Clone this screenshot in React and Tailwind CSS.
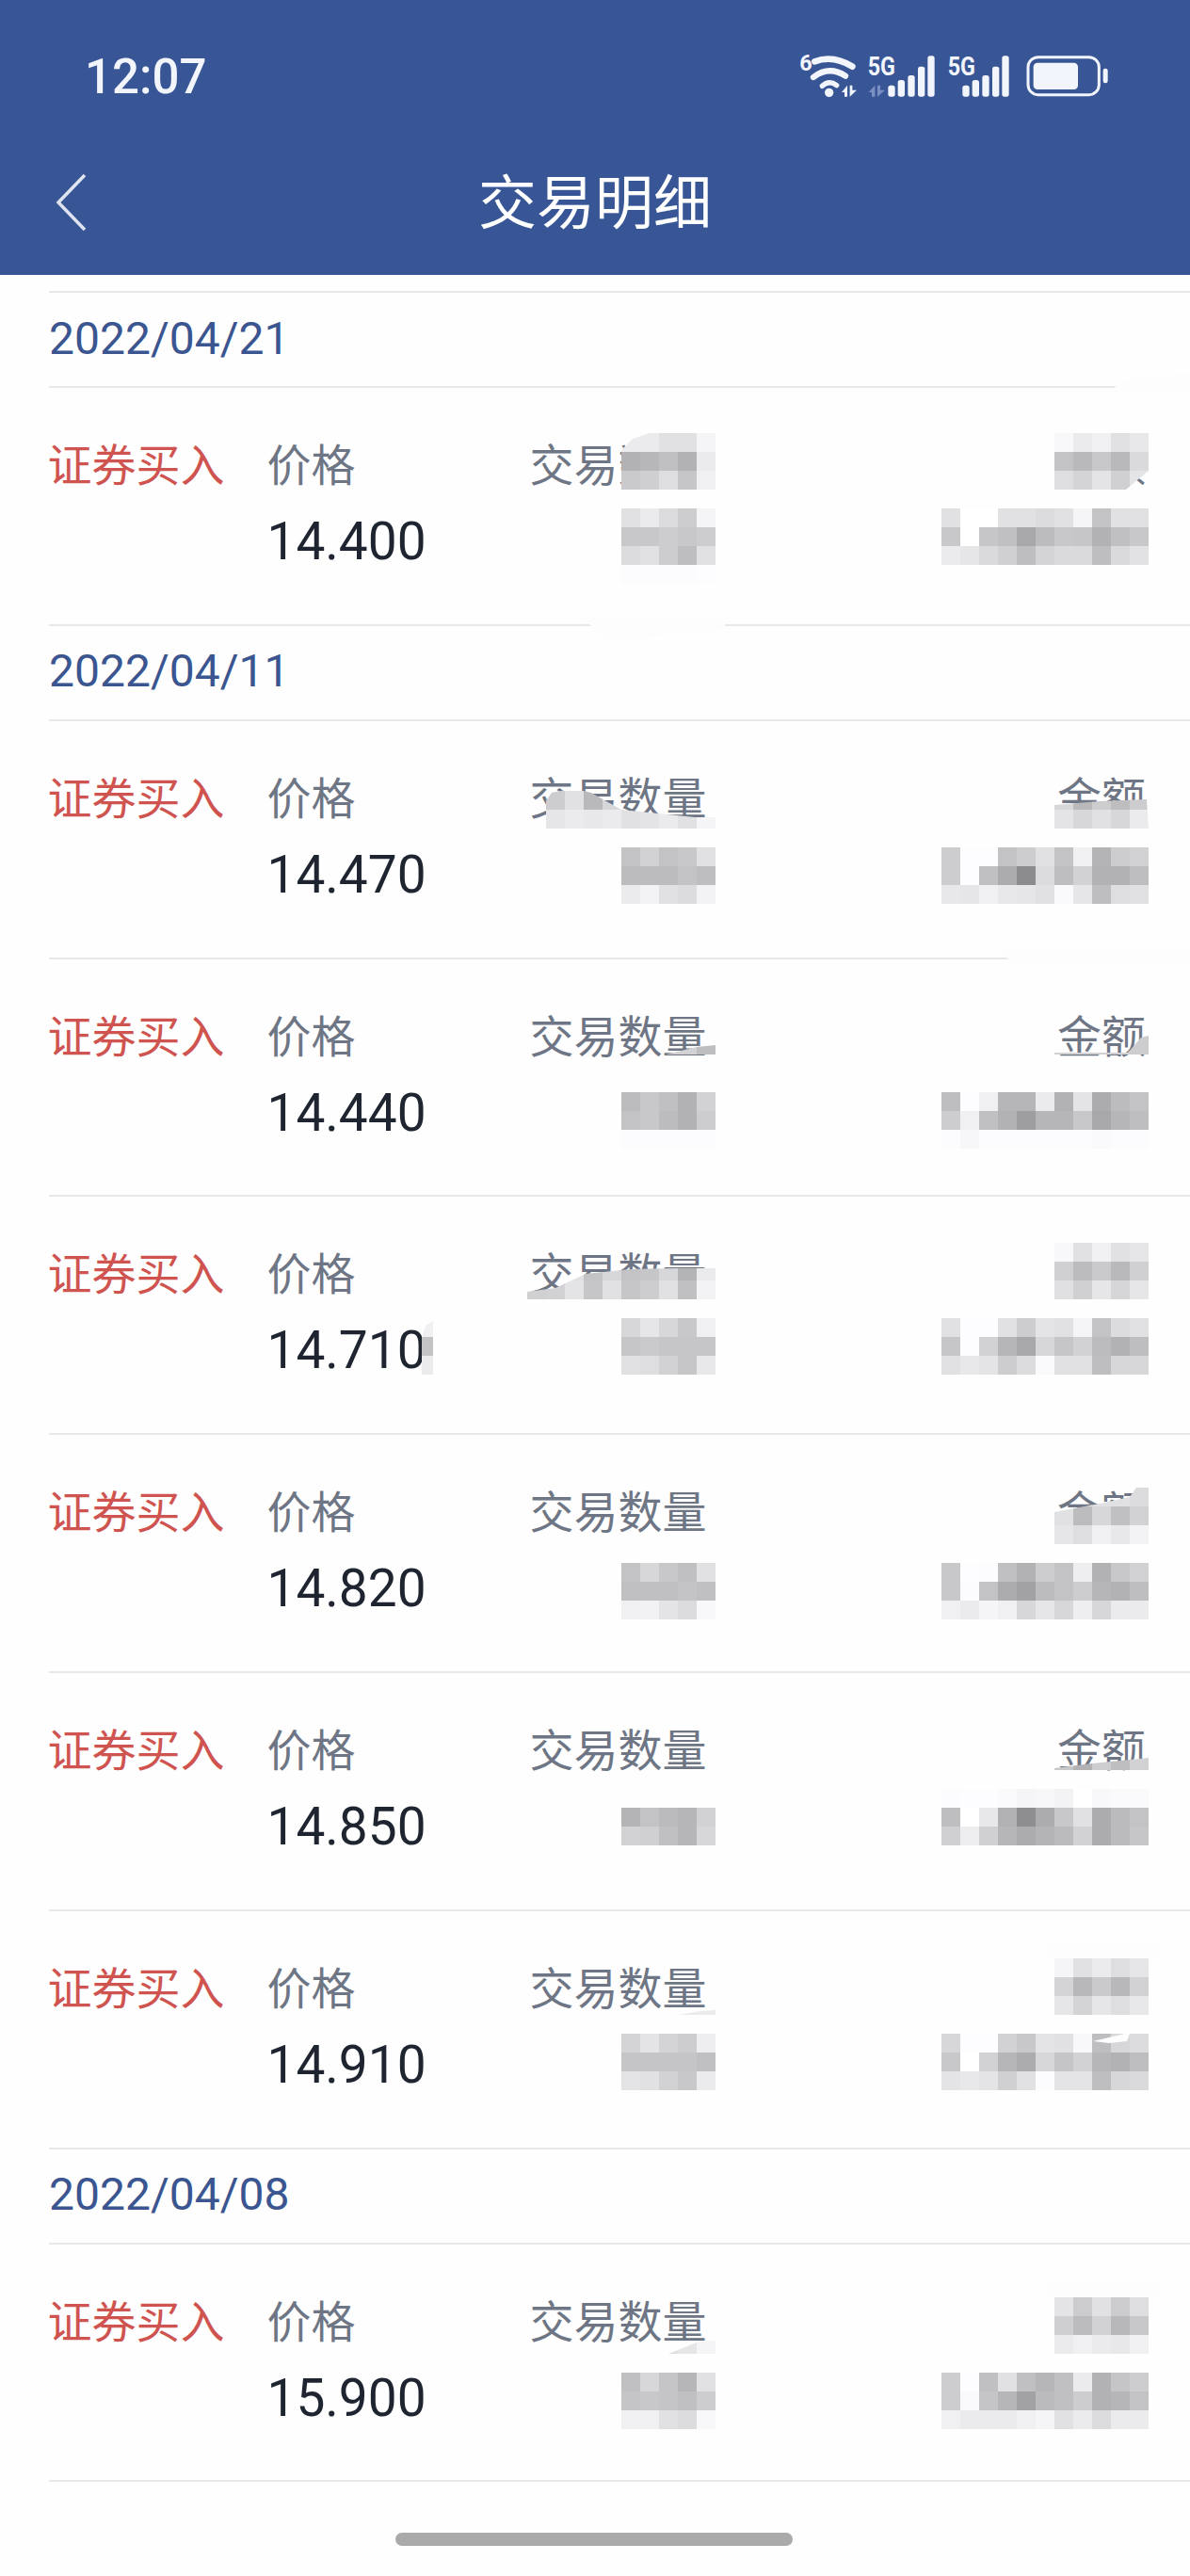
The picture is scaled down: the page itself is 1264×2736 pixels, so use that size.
import React from "react";

const C1000 = 1000;

// mosaic blocks left over the redacted values, 20px cells: gray levels per row
const patches = [
  // 2022/04/21 row
  { x: 660, y: 460, rows: [[235, 235, 225, 225, 245], [178, 183, 192, 178, 235], [202, 207, 222, 198, 240]], clip: "660,520 660,478 672,466 690,460 760,460 760,520" },
  { x: 660, y: 540, rows: [[225, 235, 220, 205, 245], [200, 200, 205, 200, 205], [220, 225, 205, 190, 225], [252, 252, 252, 252, 253]] },
  { x: 1120, y: 460, rows: [[248, 235, 240, 225, 232], [195, 185, 200, 185, 218], [222, 212, 228, 208, 228]], clip: "1120,460 1220,460 1220,500 1196,520 1120,520" },
  { x: C1000, y: 540, rows: [[225, 255, 255, 225, 225, 220, 225, 245, 195, 225, 225], [200, 255, 198, 192, 168, 188, 200, 198, 178, 192, 200], [235, 230, 218, 208, 190, 212, 218, 218, 190, 218, 226]] },

  // 14.470
  { x: 580, y: 840, rows: [[205, 225, 185, 215, 220, 215, 225, 225, 245], [230, 235, 232, 235, 225, 228, 235, 225, 245]], clip: "573,880 573,860 586,842 608,837 628,842 660,860 738,868 760,868 760,880" },
  { x: 660, y: 900, rows: [[195, 210, 195, 200, 225], [188, 188, 188, 195, 190], [235, 243, 225, 220, 243]] },
  { x: 1120, y: 840, rows: [[215, 185, 205, 190, 205], [228, 215, 225, 215, 235]], clip: "1120,880 1120,855 1168,851 1218,849 1220,880" },
  { x: C1000, y: 900, rows: [[205, 253, 253, 195, 205, 225, 195, 240, 180, 205, 210], [205, 253, 192, 172, 140, 220, 190, 210, 178, 178, 190], [232, 230, 240, 232, 230, 225, 250, 230, 190, 222, 225]] },

  // 14.440
  { x: 700, y: 1100, rows: [[210, 210, 190]], clip: "707,1120 740,1112 760,1110 760,1120" },
  { x: 1120, y: 1100, rows: [[210, 210, 210, 210, 205]], clip: "1120,1120 1120,1118 1198,1118 1212,1102 1220,1100 1220,1120" },
  { x: 660, y: 1160, rows: [[188, 200, 192, 178, 210], [195, 200, 188, 178, 205], [252, 252, 252, 252, 252]] },
  { x: C1000, y: 1160, rows: [[190, 253, 240, 182, 182, 235, 178, 228, 172, 188, 195], [205, 240, 192, 178, 158, 182, 182, 200, 168, 182, 190], [252, 247, 252, 252, 252, 252, 252, 252, 250, 252, 252]] },

  // 14.710
  { x: 560, y: 1340, rows: [[225, 225, 225, 195, 215, 195, 198, 215, 180, 235], [208, 210, 228, 198, 225, 198, 205, 225, 192, 243]], clip: "560,1380 560,1372 590,1368 622,1353 670,1348 720,1347 760,1347 760,1380" },
  { x: 440, y: 1400, rows: [[240], [195], [235]], clip: "448,1460 448,1420 452,1408 460,1403 460,1460" },
  { x: 660, y: 1400, rows: [[215, 230, 215, 200, 240], [198, 202, 198, 198, 198], [225, 222, 210, 198, 232]] },
  { x: 1120, y: 1320, rows: [[248, 225, 240, 225, 230], [208, 188, 202, 185, 208], [224, 208, 230, 214, 230]] },
  { x: C1000, y: 1400, rows: [[225, 253, 253, 225, 205, 228, 225, 245, 195, 220, 225], [198, 253, 210, 182, 168, 215, 198, 210, 188, 178, 190], [225, 232, 228, 205, 220, 250, 225, 225, 190, 215, 215]] },

  // 14.820
  { x: 1120, y: 1580, rows: [[225, 225, 225, 225, 220], [225, 188, 215, 192, 210], [230, 222, 240, 232, 243]], clip: "1120,1640 1120,1606 1168,1597 1200,1590 1207,1580 1220,1580 1220,1640" },
  { x: 660, y: 1660, rows: [[195, 215, 200, 192, 225], [192, 192, 192, 196, 192], [240, 242, 228, 220, 248]] },
  { x: C1000, y: 1660, rows: [[200, 253, 252, 192, 178, 205, 195, 238, 178, 200, 210], [200, 252, 195, 172, 162, 188, 195, 205, 182, 178, 190], [240, 235, 245, 240, 215, 230, 215, 238, 215, 235, 235]] },

  // 14.850
  { x: 1120, y: 1860, rows: [[200, 178, 205, 190, 210]], clip: "1120,1880 1120,1878 1160,1873 1220,1867 1220,1880" },
  { x: 660, y: 1920, rows: [[180, 195, 187, 182, 210], [210, 208, 192, 182, 215]] },
  { x: C1000, y: 1900, rows: [[252, 253, 253, 250, 245, 247, 243, 255, 248, 250, 250], [190, 255, 232, 178, 142, 172, 200, 225, 172, 187, 195], [208, 238, 208, 182, 172, 180, 187, 210, 172, 187, 198]] },

  // 14.910
  { x: 720, y: 2120, rows: [[235, 235]], clip: "720,2140 745,2136 760,2135 760,2140" },
  { x: 1120, y: 2080, rows: [[245, 225, 235, 222, 230], [212, 184, 202, 184, 210], [230, 212, 230, 222, 232]] },
  { x: 660, y: 2160, rows: [[212, 228, 212, 205, 238], [197, 197, 197, 197, 192], [228, 225, 210, 200, 235]] },
  { x: C1000, y: 2160, rows: [[215, 253, 253, 210, 200, 228, 225, 248, 190, 215, 220], [200, 255, 210, 182, 172, 215, 197, 210, 182, 178, 190], [228, 232, 228, 208, 225, 252, 228, 228, 190, 215, 218]] },

  // 15.900
  { x: 700, y: 2480, rows: [[225, 230, 245]], clip: "710,2500 745,2486 760,2486 760,2500" },
  { x: 660, y: 2520, rows: [[192, 215, 197, 182, 225], [197, 200, 197, 192, 205], [240, 240, 225, 220, 248]] },
  { x: 1120, y: 2440, rows: [[228, 204, 225, 204, 222], [207, 188, 210, 184, 200], [235, 240, 235, 232, 240]] },
  { x: C1000, y: 2520, rows: [[205, 253, 192, 225, 192, 182, 192, 235, 178, 197, 205], [205, 250, 197, 182, 162, 187, 192, 205, 178, 182, 195], [240, 235, 235, 235, 240, 245, 225, 235, 220, 235, 235]] },
];

// near-white smears that break the separators and hide the text tops
const smears = [
  "620,654 770,654 770,668 640,682",
  "1190,405 1264,395 1264,416 1180,416",
  "1056,1010 1264,1010 1264,1022 1085,1026",
  "1110,2066 1230,2066 1230,2082 1110,2082",
  "1110,2426 1230,2426 1230,2442 1110,2442",
];

const sections = [
  { date: "2022/04/21", prices: ["14.400"] },
  { date: "2022/04/11", prices: ["14.470", "14.440", "14.710", "14.820", "14.850", "14.910"] },
  { date: "2022/04/08", prices: ["15.900"] },
];

function Bars({ x }) {
  const bars = [[0, 182], [31, 165], [63, 150], [95, 122], [126, 88]];
  return bars.map(([dx, top]) => (
    <rect key={dx} x={x + dx} y={top} width="22" height={218 - top} rx="8" fill="#f2f5fb" />
  ));
}

function StatusIcons() {
  return (
    <svg width="380" height="90" viewBox="0 0 1140 270" className="-mt-3">
      <text x="88" y="135" fontFamily="Roboto" fontWeight="700" fontSize="70" fill="#f2f5fb">6</text>
      <g fill="none" stroke="#f2f5fb" strokeLinecap="round">
        <path d="M136 106 Q195 84 256 122" strokeWidth="20" />
        <path d="M132 156 Q182 118 234 152" strokeWidth="19" />
        <path d="M160 184 Q182 164 206 182" strokeWidth="16" />
      </g>
      <circle cx="182" cy="205" r="14" fill="#f2f5fb" />
      <path d="M222 204 L240 182 V218 H231 V204 Z M248 182 H256 V197 H270 L248 218 Z" fill="#f2f5fb" />

      <text x="305" y="150" fontFamily="Roboto" fontWeight="700" fontSize="84" fill="#f2f5fb" textLength="88" lengthAdjust="spacingAndGlyphs">5G</text>
      <path d="M308 204 L328 182 V218 H318 V204 Z M336 182 H345 V197 H360 L336 218 Z" fill="#7b8fc4" />
      <Bars x={370} />

      <text x="560" y="150" fontFamily="Roboto" fontWeight="700" fontSize="84" fill="#f2f5fb" textLength="88" lengthAdjust="spacingAndGlyphs">5G</text>
      <Bars x={607} />

      <rect x="816" y="92" width="226" height="120" rx="32" fill="none" stroke="#f2f5fb" strokeWidth="9" />
      <rect x="833" y="110" width="142" height="85" rx="13" fill="#f2f5fb" />
      <rect x="1055" y="128" width="15" height="47" rx="7" fill="#f2f5fb" />
    </svg>
  );
}

function Row({ price }) {
  return (
    <div className="flex h-[252.8px] border-t-2 border-[#e8e8e8] pt-[55px] pr-[47px]">
      <div className="-ml-[1.5px] w-[233.5px] text-[47px] leading-[56px] text-[#cf5450]">证券买入</div>
      <div className="w-[279px] -ml-[0.5px]">
        <div className="text-[47px] leading-[56px] text-[#6e7685]">价格</div>
        <div className="mt-6 text-[55px] leading-[56px] text-[#1f2530]">{price}</div>
      </div>
      <div className="flex-1 text-[47px] leading-[56px] text-[#6e7685]">交易数量</div>
      <div className="text-[47px] leading-[56px] text-[#6e7685]">金额</div>
    </div>
  );
}

// redaction layer lying over the list
function Redactions() {
  return (
    <svg width="1264" height="2736" className="absolute top-0 left-0 pointer-events-none">
      <defs>
        {patches.map((p, i) =>
          p.clip ? (
            <clipPath key={i} id={`clip-${i}`}>
              <polygon points={p.clip} />
            </clipPath>
          ) : null
        )}
      </defs>
      {smears.map((pts) => (
        <polygon key={pts} points={pts} fill="#fdfdfd" />
      ))}
      {patches.map((p, i) => (
        <g key={i} clipPath={p.clip ? `url(#clip-${i})` : undefined} shapeRendering="crispEdges">
          {p.rows.map((row, r) =>
            row.map((v, c) => (
              <rect key={c} x={p.x + c * 20} y={p.y + r * 20} width="20" height="20" fill={`rgb(${v},${v},${Math.min(v + 3, 255)})`} />
            ))
          )}
        </g>
      ))}
      <polygon points="1161,2168 1195,2160 1200,2160 1197,2168 1178,2170" fill="#fdfdfd" />
    </svg>
  );
}

export default function App() {
  return (
    <div className="relative h-[2736px] w-[1264px] overflow-hidden bg-[#fefefe] font-[Roboto,'Noto_Sans_CJK_SC',sans-serif]">
      <header className="h-[292px] bg-[#385696] text-white">
        <div className="flex h-[162px] items-center justify-between pl-[90px] pr-[64px]">
          <span className="text-[51px] font-medium leading-none text-[#f2f5fb]">12:07</span>
          <StatusIcons />
        </div>
        <div className="flex h-[110px] items-center pl-[56px] pr-[56px]">
          <svg width="40" height="66" viewBox="0 0 40 66" className="-mt-1 shrink-0">
            <path d="M34 4 L6 33 L34 62" fill="none" stroke="#dfe4f0" strokeWidth="3.5" />
          </svg>
          <h1 className="flex-1 pr-[40px] text-center text-[62px] font-normal leading-none">交易明细</h1>
        </div>
      </header>

      <main className="pt-[17px] pl-[52px]">
        {sections.map((s) => (
          <section key={s.date}>
            <div className="flex h-[101px] items-center border-t-2 border-[#e8e8e8] pb-[2px] text-[48px] leading-none text-[#3a5590]">
              {s.date}
            </div>
            {s.prices.map((price) => (
              <Row key={price} price={price} />
            ))}
          </section>
        ))}
        <div className="border-t-2 border-[#e8e8e8]" />
      </main>

      <Redactions />

      <div className="absolute bottom-[32px] left-[420px] h-[14px] w-[422px] rounded-full bg-[#aaaaaa]" />
    </div>
  );
}
